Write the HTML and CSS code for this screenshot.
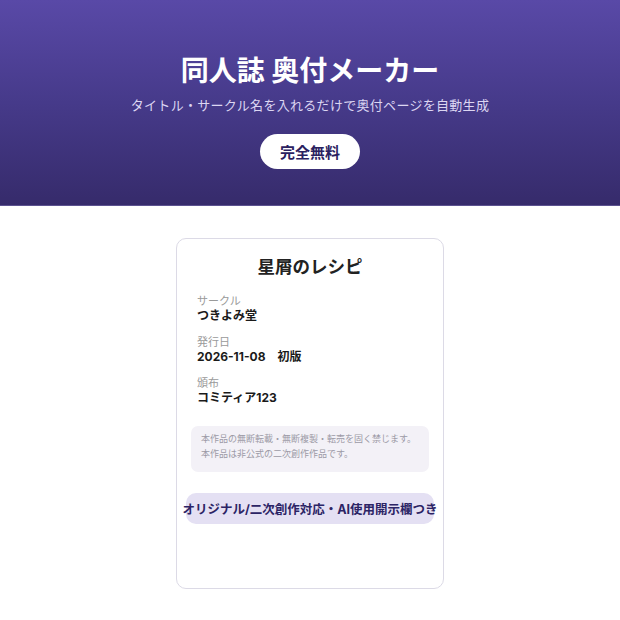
FILE: index.html
```
<!DOCTYPE html>
<html lang="ja">
<head>
<meta charset="utf-8">
<link rel="stylesheet" href="styles.css">
</head>
<body>
<header class="hero">
  <h1 class="hero-title">同人誌 奥付メーカー</h1>
  <p class="hero-sub">タイトル・サークル名を入れるだけで奥付ページを自動生成</p>
  <span class="hero-badge">完全無料</span>
</header>
<main class="main">
  <section class="card">
    <h2 class="card-title">星屑のレシピ</h2>
    <div class="field">
      <div class="field-label">サークル</div>
      <div class="field-value">つきよみ堂</div>
    </div>
    <div class="field">
      <div class="field-label">発行日</div>
      <div class="field-value">2026-11-08　初版</div>
    </div>
    <div class="field">
      <div class="field-label">頒布</div>
      <div class="field-value">コミティア123</div>
    </div>
    <div class="notice">
      <p>本作品の無断転載・無断複製・転売を固く禁じます。</p>
      <p>本作品は非公式の二次創作作品です。</p>
    </div>
    <div class="tag"><span>オリジナル/二次創作対応・AI使用開示欄つき</span></div>
  </section>
</main>
</body>
</html>
```
FILE: styles.css
```
* { box-sizing: border-box; }
html, body { margin: 0; padding: 0; }
body {
  font-family: Inter, "Noto Sans CJK JP", "Noto Sans", sans-serif;
  background: #ffffff;
  color: #1f1f1f;
}
.hero {
  height: 206px;
  padding-top: 53px;
  background: linear-gradient(180deg, #5949a7 0%, #463a8a 50%, #362b6b 100%);
  border-bottom: 1px solid #5c5290;
  display: flex;
  flex-direction: column;
  align-items: center;
  color: #fff;
}
.hero-title {
  margin: 0;
  font-size: 28px;
  line-height: 36px;
  font-weight: 700;
}
.hero-sub {
  margin: 7px 0 0;
  font-size: 13px;
  line-height: 18px;
  letter-spacing: 0.3px;
  color: #dcd6f2;
}
.hero-badge {
  margin-top: 20px;
  height: 35px;
  width: 100px;
  display: flex;
  align-items: center;
  justify-content: center;
  background: #fff;
  border-radius: 18px;
  color: #2a2160;
  font-size: 15px;
  font-weight: 700;
}
.main {
  display: flex;
  justify-content: center;
  padding-top: 32px;
}
.card {
  width: 268px;
  height: 351px;
  border: 1px solid #dcdae6;
  border-radius: 10px;
  padding: 16px 0 0;
  display: flex;
  flex-direction: column;
}
.card-title {
  margin: 0 0 16px;
  text-align: center;
  font-size: 17.5px;
  line-height: 24px;
  font-weight: 700;
  color: #222;
}
.field {
  margin: 0 20px;
}
.field + .field { margin-top: 14px; }
.field-label {
  font-size: 11px;
  line-height: 12px;
  color: #9a9a9a;
}
.field-value {
  margin-top: 3px;
  font-size: 12px;
  line-height: 12px;
  font-weight: 700;
  color: #1a1a1a;
}
.notice {
  margin: 22px 14px 0;
  height: 46px;
  padding: 5px 10px 0;
  background: #f3f1f7;
  border-radius: 7px;
}
.notice p {
  margin: 0;
  font-size: 9px;
  line-height: 15px;
  color: #9c9aa6;
}
.tag {
  margin: 21px 9px 0;
  height: 31px;
  background: #e4e0f3;
  border-radius: 10px;
  display: flex;
  align-items: center;
  justify-content: center;
  white-space: nowrap;
}
.tag span {
  font-size: 12.5px;
  font-weight: 700;
  color: #2c2465;
}
```
